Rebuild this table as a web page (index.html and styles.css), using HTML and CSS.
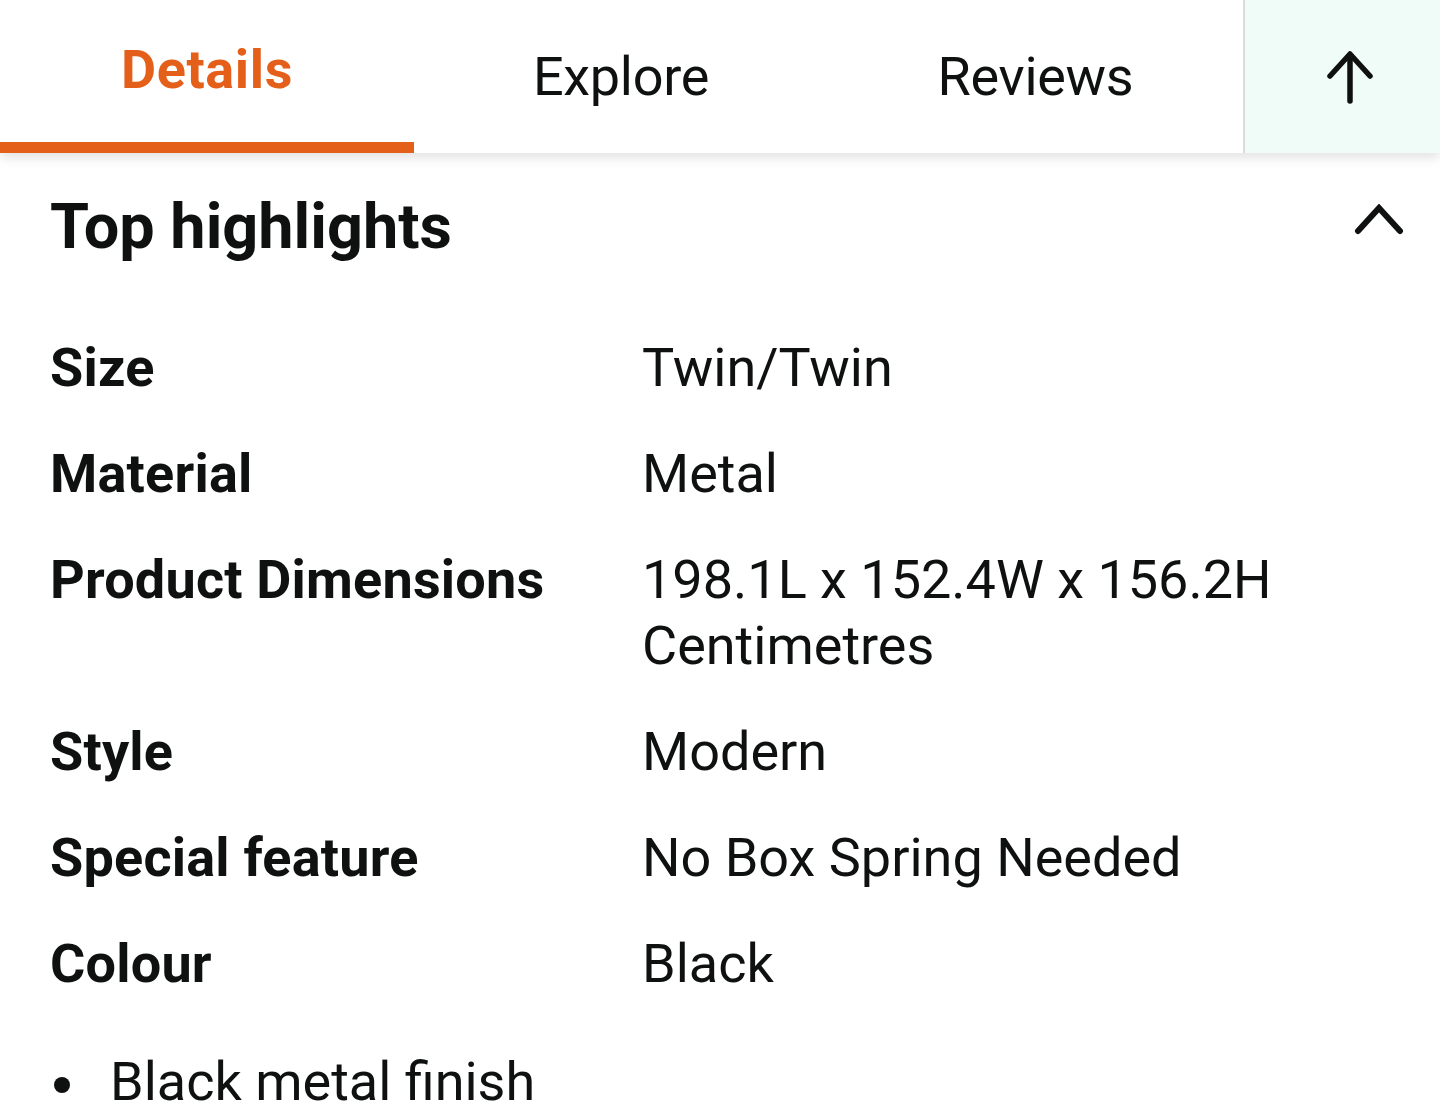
FILE: index.html
```html
<!DOCTYPE html>
<html lang="en">
<head>
<meta charset="utf-8">
<title>Details</title>
<link rel="stylesheet" href="styles.css">
</head>
<body>
<nav class="tabbar">
  <div class="tab tab-active">Details</div>
  <div class="tab">Explore</div>
  <div class="tab">Reviews</div>
  <div class="top-btn">
    <svg width="60" height="60" viewBox="0 0 60 60" fill="none" stroke="#0f1111" stroke-width="5.5" stroke-linecap="round" stroke-linejoin="round">
      <path d="M30 54 V8"/>
      <path d="M10 29 L30 7 L50 29"/>
    </svg>
  </div>
</nav>
<main class="content">
  <div class="section-head">
    <h2 class="section-title">Top highlights</h2>
    <svg class="chevron" width="52" height="34" viewBox="0 0 52 34" fill="none" stroke="#0f1111" stroke-width="6" stroke-linecap="round" stroke-linejoin="miter">
      <path d="M6 27 L27 4 L48 27"/>
    </svg>
  </div>
  <dl class="specs">
    <dt>Size</dt><dd>Twin/Twin</dd>
    <dt>Material</dt><dd>Metal</dd>
    <dt>Product Dimensions</dt><dd>198.1L x 152.4W x 156.2H Centimetres</dd>
    <dt>Style</dt><dd>Modern</dd>
    <dt>Special feature</dt><dd>No Box Spring Needed</dd>
    <dt>Colour</dt><dd>Black</dd>
  </dl>
  <ul class="bullets">
    <li>Black metal finish</li>
  </ul>
</main>
</body>
</html>
```
FILE: styles.css
```css
* { box-sizing: border-box; }
html, body { margin: 0; padding: 0; }
body {
  width: 1440px;
  height: 1110px;
  overflow: hidden;
  background: #ffffff;
  color: #0f1111;
  font-family: Roboto, "Noto Sans", "Liberation Sans", sans-serif;
}

.tabbar {
  display: grid;
  grid-template-columns: 414px 414px 415px 197px;
  height: 153px;
  background: #ffffff;
  box-shadow: 0 5px 10px rgba(0, 0, 0, 0.11);
  position: relative;
  z-index: 1;
}
.tab {
  text-align: center;
  font-size: 54px;
  line-height: 66px;
  font-weight: 400;
  padding-top: 44px;
  letter-spacing: -0.3px;
}
.tab-active {
  color: #e4601a;
  font-weight: 700;
  padding-top: 37px;
  letter-spacing: 0.6px;
  border-bottom: 11px solid #e4601a;
}
.top-btn {
  background: #effcf8;
  border-left: 2px solid #dcdcdc;
  display: flex;
  align-items: center;
  justify-content: center;
  padding-left: 14px;
}

.content {
  padding: 0 36px 0 50px;
}
.section-head {
  display: flex;
  justify-content: space-between;
  align-items: flex-start;
  padding-top: 37px;
}
.section-title {
  margin: 0;
  font-size: 63px;
  line-height: 74px;
  font-weight: 700;
  letter-spacing: 0;
}
.chevron {
  margin-top: 14px;
}

.specs {
  display: grid;
  grid-template-columns: 592px 1fr;
  row-gap: 40px;
  margin: 71px 0 0;
  font-size: 54px;
  line-height: 66px;
}
.specs dt {
  font-weight: 700;
  letter-spacing: 0.2px;
}
.specs dd {
  margin: 0;
  font-weight: 400;
  letter-spacing: 0;
}

.bullets {
  list-style: none;
  margin: 52px 0 0;
  padding: 0;
  font-size: 54px;
  line-height: 66px;
}
.bullets li {
  position: relative;
  padding-left: 60px;
}
.bullets li::before {
  content: "";
  position: absolute;
  left: 4px;
  top: 28px;
  width: 16px;
  height: 16px;
  border-radius: 50%;
  background: #0f1111;
}
```
